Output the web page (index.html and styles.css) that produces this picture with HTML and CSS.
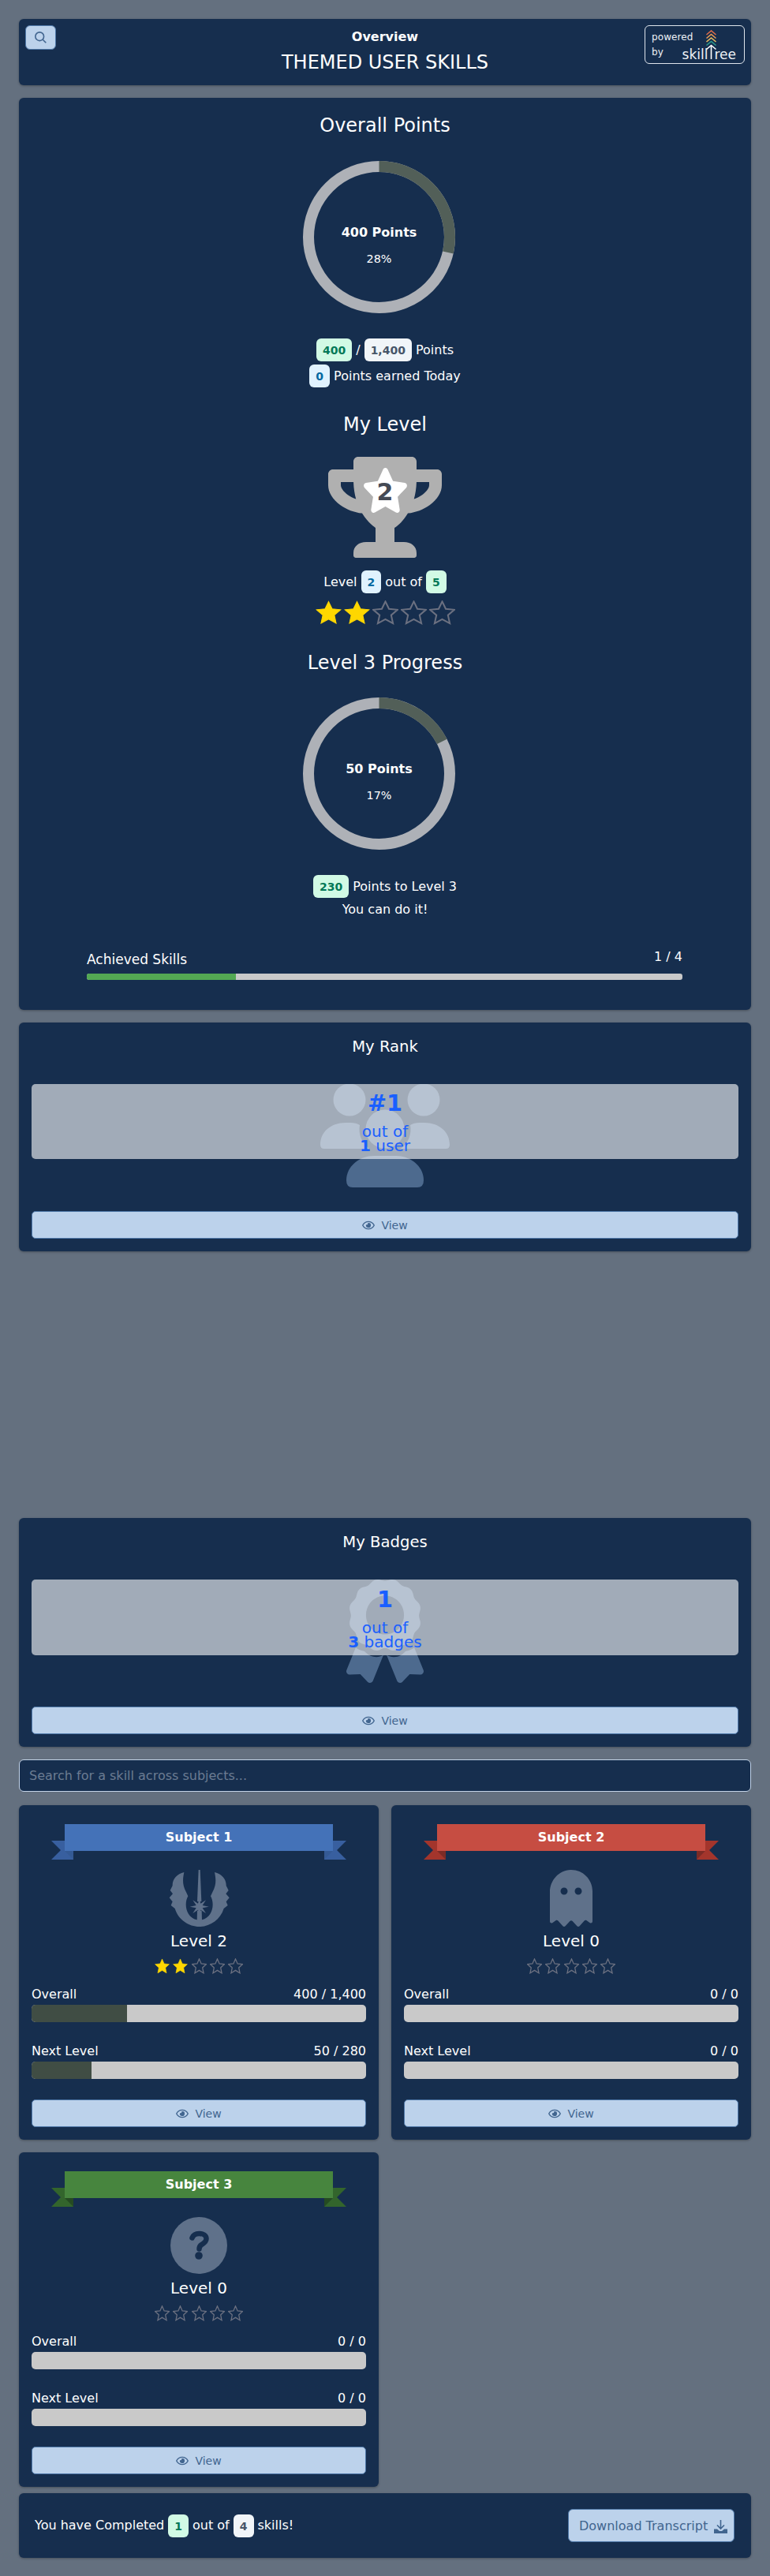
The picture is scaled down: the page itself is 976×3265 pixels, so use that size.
FILE: index.html
```html
<!DOCTYPE html>
<html lang="en">
<head>
<meta charset="utf-8">
<title>Themed User Skills</title>
<link rel="stylesheet" href="styles.css">
</head>
<body>
<svg class="sprite" aria-hidden="true">
  <symbol id="star" viewBox="0 0 32 32" preserveAspectRatio="none"><polygon points="16,1.5 20.4,11.1 31,12.2 23.1,19.3 25.3,30 16,24.6 6.7,30 8.9,19.3 1,12.2 11.6,11.1"/></symbol>
  <symbol id="eye" viewBox="0 0 576 512"><path d="M288 144a110.94 110.94 0 0 0-31.24 5 55.4 55.4 0 0 1 7.24 27 56 56 0 0 1-56 56 55.4 55.4 0 0 1-27-7.24A111.71 111.71 0 1 0 288 144zm284.52 97.4C518.29 135.59 410.93 64 288 64S57.68 135.64 3.48 241.41a32.35 32.35 0 0 0 0 29.19C57.71 376.41 165.07 448 288 448s230.32-71.64 284.52-177.41a32.35 32.35 0 0 0 0-29.19zM288 400c-98.65 0-189.09-55-237.93-144C98.91 167 189.34 112 288 112s189.09 55 237.93 144C477.1 345 386.66 400 288 400z"/></symbol>
</svg>
<main class="page">

  <header class="card top">
    <button class="search-btn" aria-label="Search">
      <svg viewBox="0 0 20 20" class="search-ico"><circle cx="8.5" cy="8.5" r="6.3"/><line x1="13.2" y1="13.2" x2="18" y2="18"/></svg>
    </button>
    <div class="top-titles">
      <div class="top-over">Overview</div>
      <h1 class="top-name">THEMED USER SKILLS</h1>
    </div>
    <div class="logo">
      <svg class="logo-tree" viewBox="0 0 14 37">
        <polyline class="c1" points="1,6 7,1 13,6"/>
        <polyline class="c2" points="1,10.5 7,5.5 13,10.5"/>
        <polyline class="c3" points="1,15 7,10 13,15"/>
        <polyline class="c4" points="1,19.5 7,14.5 13,19.5"/>
        <polyline class="c5" points="1,24.5 7,19.5 13,24.5"/>
        <line class="c5" x1="7" y1="20" x2="7" y2="37"/>
      </svg>
      <div class="logo-words">powered</div>
      <div class="logo-row"><span class="logo-words">by</span><span class="logo-name">skill<span class="logo-gap"></span>ree</span></div>
    </div>
  </header>

  <section class="card points">
    <h2 class="sec-title first">Overall Points</h2>
    <div class="chart">
      <div class="ring">
        <svg viewBox="0 0 193 193"><circle class="ring-track" cx="96.5" cy="96.5" r="89.5"/><circle class="ring-fill" cx="96.5" cy="96.5" r="89.5" pathLength="100" stroke-dasharray="28.5 71.5"/></svg>
        <div class="ring-text"><strong>400 Points</strong><span>28%</span></div>
      </div>
    </div>
    <div class="stat-row gap-a"><span class="pill green">400</span><span>/</span><span class="pill gray">1,400</span><span>Points</span></div>
    <div class="stat-row"><span class="pill blue">0</span><span>Points earned Today</span></div>

    <h2 class="sec-title level">My Level</h2>
    <div class="trophy">
      <svg viewBox="0 0 576 512"><path class="trophy-cup" d="M552 64H448V24c0-13.3-10.7-24-24-24H152c-13.3 0-24 10.7-24 24v40H24C10.7 64 0 74.7 0 88v56c0 35.7 22.5 72.4 61.9 100.7 31.5 22.7 69.8 37.1 110 41.7C203.3 338.5 240 360 240 360v72h-48c-35.3 0-64 20.7-64 56v12c0 6.6 5.4 12 12 12h296c6.6 0 12-5.4 12-12v-12c0-35.3-28.7-56-64-56h-48v-72s36.7-21.5 68.1-73.6c40.3-4.6 78.6-19 110-41.7 39.3-28.3 61.9-65 61.9-100.7V88c0-13.3-10.7-24-24-24zM99.3 192.8C74.9 175.2 64 155.6 64 144v-16h64.2c1 32.6 5.8 61.2 12.8 86.2-15.1-5.2-29.2-12.4-41.7-21.4zM512 144c0 16.1-17.7 36.1-35.3 48.8-12.5 9-26.7 16.2-41.8 21.4 7-25 11.8-53.6 12.8-86.2H512v16z"/></svg>
      <svg class="trophy-star" viewBox="0 0 576 512" preserveAspectRatio="none"><path d="M259.3 17.8L194 150.2 47.9 171.5c-26.2 3.8-36.7 36.1-17.7 54.6l105.7 103-25 145.5c-4.5 26.3 23.2 46 46.4 33.7L288 439.6l130.7 68.7c23.2 12.2 50.9-7.4 46.4-33.7l-25-145.5 105.7-103c19-18.5 8.5-50.8-17.7-54.6L382 150.2 316.7 17.8c-11.7-23.6-45.6-24.1-57.4 0z"/></svg>
      <span class="trophy-num">2</span>
    </div>
    <div class="stat-row gap-b"><span>Level</span><span class="pill blue">2</span><span>out of</span><span class="pill green">5</span></div>
    <div class="stars big">
      <svg class="star on"><use href="#star"/></svg><svg class="star on"><use href="#star"/></svg><svg class="star"><use href="#star"/></svg><svg class="star"><use href="#star"/></svg><svg class="star"><use href="#star"/></svg>
    </div>

    <h2 class="sec-title progress">Level 3 Progress</h2>
    <div class="chart">
      <div class="ring">
        <svg viewBox="0 0 193 193"><circle class="ring-track" cx="96.5" cy="96.5" r="89.5"/><circle class="ring-fill" cx="96.5" cy="96.5" r="89.5" pathLength="100" stroke-dasharray="17.5 82.5"/></svg>
        <div class="ring-text"><strong>50 Points</strong><span>17%</span></div>
      </div>
    </div>
    <div class="stat-row gap-a"><span class="pill green">230</span><span>Points to Level 3</span></div>
    <div class="cheer">You can do it!</div>

    <div class="achieved">
      <div class="achieved-head"><span class="ach-label">Achieved Skills</span><span class="ach-val">1 / 4</span></div>
      <div class="thin-bar"><div class="thin-fill" style="width:25%"></div></div>
    </div>
  </section>

  <section class="card vis rank">
    <h2 class="vis-title">My Rank</h2>
    <div class="vis-wrap">
      <svg class="vis-icon users" viewBox="0 0 164 132">
        <circle cx="37" cy="20" r="20.5"/><circle cx="131" cy="20" r="20.5"/><circle cx="82" cy="57" r="24.5"/>
        <path d="M0 77C0 60 14 49 32 49H38C43 49 47 50 50 52C48 63 52 74 62 82H5Q0 82 0 77Z"/>
        <path d="M164 77C164 60 150 49 132 49H126C121 49 117 50 114 52C116 63 112 74 102 82H159Q164 82 164 77Z"/>
        <path d="M33 122C33 104 50 91 68 91H96C114 91 131 104 131 122Q131 131 123 131H41Q33 131 33 122Z"/>
      </svg>
      <div class="vis-box">
        <div class="vis-big">#1</div>
        <div class="vis-sub">out of</div>
        <div class="vis-sub"><b>1</b> user</div>
      </div>
    </div>
    <button class="view-btn"><svg class="eye"><use href="#eye"/></svg><span>View</span></button>
  </section>

  <section class="card vis">
    <h2 class="vis-title">My Badges</h2>
    <div class="vis-wrap">
      <svg class="vis-icon award" viewBox="0 0 384 512" preserveAspectRatio="none"><path d="M97.12 362.63c-8.69-8.69-4.16-6.24-25.12-11.85-9.51-2.55-17.87-7.45-25.43-13.32L1.2 448.7c-4.39 10.77 3.81 22.47 15.43 22.03l52.69-2.01L105.56 507c8 8.44 22.04 5.81 26.43-4.96l52.05-127.62c-10.84 6.04-22.87 9.58-35.31 9.58-19.5 0-37.82-7.59-51.61-21.37zM382.8 448.7l-45.37-111.24c-7.56 5.88-15.92 10.77-25.43 13.32-21.07 5.64-16.45 3.18-25.12 11.85-13.79 13.78-32.12 21.37-51.62 21.37-12.44 0-24.47-3.55-35.31-9.58L252 502.04c4.39 10.77 18.44 13.4 26.43 4.96l36.25-38.28 52.69 2.01c11.62.44 19.82-11.27 15.43-22.03zM263 340c15.28-15.55 17.03-14.21 38.79-20.14 13.89-3.79 24.75-14.84 28.47-28.98 7.48-28.4 5.54-24.97 25.95-45.75 10.17-10.35 14.14-25.44 10.42-39.58-7.47-28.38-7.48-24.42 0-52.83 3.72-14.14-.25-29.23-10.42-39.58-20.41-20.78-18.47-17.36-25.95-45.75-3.72-14.14-14.58-25.19-28.47-28.98-27.88-7.61-24.52-5.62-44.95-26.41-10.17-10.35-25-14.4-38.89-10.61-27.87 7.6-23.98 7.61-51.9 0-13.89-3.79-28.72.25-38.89 10.61-20.41 20.78-17.05 18.8-44.94 26.41-13.89 3.79-24.75 14.84-28.47 28.98-7.47 28.39-5.54 24.97-25.95 45.75-10.17 10.35-14.15 25.44-10.42 39.58 7.47 28.36 7.48 24.4 0 52.82-3.72 14.14.25 29.23 10.42 39.59 20.41 20.78 18.47 17.35 25.95 45.75 3.72 14.14 14.58 25.19 28.47 28.98C104.6 325.96 106.27 325 121 340c13.23 13.47 33.84 15.88 49.74 5.82a39.676 39.676 0 0 1 42.53 0c15.89 10.06 36.5 7.65 49.73-5.82zM97.66 175.96c0-53.03 42.24-96.02 94.34-96.02s94.34 42.99 94.34 96.02-42.24 96.02-94.34 96.02-94.34-42.99-94.34-96.02z"/></svg>
      <div class="vis-box tall">
        <div class="vis-big">1</div>
        <div class="vis-sub">out of</div>
        <div class="vis-sub"><b>3</b> badges</div>
      </div>
    </div>
    <button class="view-btn"><svg class="eye"><use href="#eye"/></svg><span>View</span></button>
  </section>

  <input class="search-input" type="text" placeholder="Search for a skill across subjects...">

  <div class="subjects">
    <article class="card subject s1">
      <div class="banner">
        <svg class="tails" viewBox="0 0 374 24"><polygon class="tail" points="0,0 17,0 17,13 28,13 28,24 0,24 12,12"/><polygon class="fold" points="17,13 28,13 28,24"/><polygon class="tail" points="374,0 357,0 357,13 346,13 346,24 374,24 362,12"/><polygon class="fold" points="357,13 346,13 346,24"/></svg>
        <span>Subject 1</span>
      </div>
      <div class="subj-icon">
        <svg class="ico-jedi" viewBox="39 15 231 216">
          <path fill-rule="evenodd" d="M97 24C70 30 52 50 53 75L44 93L54 106L41 121L53 136L47 150L62 162C75 205 115 231 155 231C195 231 235 205 248 162L263 150L257 136L269 121L256 106L266 93L257 75C258 50 240 30 213 24C217 45 222 70 205 100L198 115C215 145 205 195 165 205H145C105 195 95 145 112 115L105 100C88 70 93 45 97 24Z"/>
          <polygon points="152,15 158,15 163,135 147,135"/>
          <polygon points="191,155 167,160 180,180 160,167 155,191 150,167 130,180 143,160 119,155 143,150 130,130 150,143 155,119 160,143 180,130 167,150"/>
          <polygon points="147,170 164,170 165,210 146,210"/>
        </svg>
      </div>
      <div class="subj-level">Level 2</div>
      <div class="stars small">
        <svg class="star on"><use href="#star"/></svg><svg class="star on"><use href="#star"/></svg><svg class="star"><use href="#star"/></svg><svg class="star"><use href="#star"/></svg><svg class="star"><use href="#star"/></svg>
      </div>
      <div class="meter"><div class="meter-head"><span>Overall</span><span>400 / 1,400</span></div><div class="bar"><div class="bar-fill" style="width:28.6%"></div></div></div>
      <div class="meter"><div class="meter-head"><span>Next Level</span><span>50 / 280</span></div><div class="bar"><div class="bar-fill" style="width:17.9%"></div></div></div>
      <button class="view-btn"><svg class="eye"><use href="#eye"/></svg><span>View</span></button>
    </article>

    <article class="card subject s2">
      <div class="banner">
        <svg class="tails" viewBox="0 0 374 24"><polygon class="tail" points="0,0 17,0 17,13 28,13 28,24 0,24 12,12"/><polygon class="fold" points="17,13 28,13 28,24"/><polygon class="tail" points="374,0 357,0 357,13 346,13 346,24 374,24 362,12"/><polygon class="fold" points="357,13 346,13 346,24"/></svg>
        <span>Subject 2</span>
      </div>
      <div class="subj-icon">
        <svg class="ico-ghost" viewBox="0 0 384 512"><path d="M186.1.09C81.01 3.24 0 94.92 0 200.05v263.92c0 14.26 17.23 21.39 27.31 11.31l24.92-18.53c6.66-4.95 16-3.99 21.51 2.21l42.95 48.35c6.25 6.25 16.38 6.25 22.63 0l40.72-45.85c6.37-7.17 17.56-7.17 23.92 0l40.72 45.85c6.25 6.25 16.38 6.25 22.63 0l42.95-48.35c5.51-6.2 14.85-7.16 21.51-2.21l24.92 18.53c10.08 10.08 27.31 2.95 27.31-11.31V192C384 84 294.83-3.17 186.1.09zM128 224c-17.67 0-32-14.33-32-32s14.33-32 32-32 32 14.33 32 32-14.33 32-32 32zm128 0c-17.67 0-32-14.33-32-32s14.33-32 32-32 32 14.33 32 32-14.33 32-32 32z"/></svg>
      </div>
      <div class="subj-level">Level 0</div>
      <div class="stars small">
        <svg class="star"><use href="#star"/></svg><svg class="star"><use href="#star"/></svg><svg class="star"><use href="#star"/></svg><svg class="star"><use href="#star"/></svg><svg class="star"><use href="#star"/></svg>
      </div>
      <div class="meter"><div class="meter-head"><span>Overall</span><span>0 / 0</span></div><div class="bar"></div></div>
      <div class="meter"><div class="meter-head"><span>Next Level</span><span>0 / 0</span></div><div class="bar"></div></div>
      <button class="view-btn"><svg class="eye"><use href="#eye"/></svg><span>View</span></button>
    </article>

    <article class="card subject s3">
      <div class="banner">
        <svg class="tails" viewBox="0 0 374 24"><polygon class="tail" points="0,0 17,0 17,13 28,13 28,24 0,24 12,12"/><polygon class="fold" points="17,13 28,13 28,24"/><polygon class="tail" points="374,0 357,0 357,13 346,13 346,24 374,24 362,12"/><polygon class="fold" points="357,13 346,13 346,24"/></svg>
        <span>Subject 3</span>
      </div>
      <div class="subj-icon">
        <svg class="ico-help" viewBox="0 0 72 72"><circle cx="36" cy="36" r="36"/><path class="help-mark" d="M27.5 26.5C29 22.5 32.5 21 36.5 21C41.5 21 45.5 23.5 45.5 27.5C45.5 31.5 42.5 33 39.5 35C37.5 36.3 36.5 37.5 36.5 40.5"/><circle class="help-dot" cx="36" cy="49" r="4.8"/></svg>
      </div>
      <div class="subj-level">Level 0</div>
      <div class="stars small">
        <svg class="star"><use href="#star"/></svg><svg class="star"><use href="#star"/></svg><svg class="star"><use href="#star"/></svg><svg class="star"><use href="#star"/></svg><svg class="star"><use href="#star"/></svg>
      </div>
      <div class="meter"><div class="meter-head"><span>Overall</span><span>0 / 0</span></div><div class="bar"></div></div>
      <div class="meter"><div class="meter-head"><span>Next Level</span><span>0 / 0</span></div><div class="bar"></div></div>
      <button class="view-btn"><svg class="eye"><use href="#eye"/></svg><span>View</span></button>
    </article>
  </div>

  <footer class="card foot">
    <div class="foot-text"><span>You have Completed</span><span class="pill green">1</span><span>out of</span><span class="pill gray">4</span><span>skills!</span></div>
    <button class="dl-btn"><span>Download Transcript</span>
      <svg class="dl-ico" viewBox="0 0 17 17"><path class="dl-arrow" d="M8.5 0V10M4 6.5L8.5 11L13 6.5"/><path class="dl-tray" d="M0 11.5H4L7 14H10L13 11.5H17V17H0Z"/></svg>
    </button>
  </footer>
</main>
</body>
</html>
```

FILE: styles.css
```css
* { box-sizing: border-box; }
html, body { margin: 0; padding: 0; }
body {
  background: #64707f;
  color: #fff;
  font-family: "DejaVu Sans", sans-serif;
  font-size: 16px;
  line-height: 1.5;
}
.sprite { position: absolute; width: 0; height: 0; }
.page {
  padding: 24px 24px 23px;
  display: flex;
  flex-direction: column;
  gap: 16px;
}
.card {
  background: #162e4e;
  border-radius: 6px;
  box-shadow: 0 1px 3px rgba(0, 0, 0, .3);
}
h1, h2 { margin: 0; font-weight: 400; }

/* header */
.top {
  height: 84px;
  padding: 8px;
  display: grid;
  grid-template-columns: 1fr auto 1fr;
  align-items: start;
}
.search-btn {
  width: 39px;
  height: 31px;
  padding: 0;
  display: flex;
  align-items: center;
  justify-content: center;
  background: #bcd2eb;
  border: 1px solid #4f78a8;
  border-radius: 6px;
}
.search-ico { width: 17px; height: 17px; fill: none; stroke: #41658f; stroke-width: 1.9; }
.top-titles { text-align: center; }
.top-over { font-size: 16px; font-weight: 700; line-height: 24px; margin-top: 3px; }
.top-name { font-size: 24px; line-height: 36px; margin-top: 2px; white-space: nowrap; }
.logo {
  position: relative;
  justify-self: end;
  width: 127px;
  height: 49px;
  border: 1px solid #dfe5ec;
  border-radius: 6px;
  padding: 5px 8px 0;
  color: #eef2f6;
}
.logo-words { font-size: 12px; line-height: 18px; letter-spacing: .1px; }
.logo-row { display: flex; justify-content: space-between; align-items: flex-start; line-height: 18px; margin-top: 1px; }
.logo-name { font-size: 17px; line-height: 20px; margin: 2px 2px 0 0; }
.logo-gap { display: inline-block; width: 8px; }
.logo-tree { position: absolute; left: 76px; top: 5px; width: 15px; height: 37px; fill: none; stroke-width: 1.6; }
.c1 { stroke: #dc6d4b; }
.c2 { stroke: #ee9b52; }
.c3 { stroke: #e9bf63; }
.c4 { stroke: #2a9d8f; }
.c5 { stroke: #fff; }

/* points card */
.points { height: 1156px; padding-top: 17px; text-align: center; }
.sec-title { font-size: 24px; line-height: 36px; }
.sec-title.level { margin-top: 27px; }
.sec-title.progress { margin-top: 30px; }
.chart { display: flex; justify-content: center; padding-right: 15px; margin-top: 27px; }
.sec-title.progress + .chart { margin-top: 26px; }
.ring { position: relative; width: 193px; height: 193px; }
.ring svg { display: block; width: 193px; height: 193px; }
.ring circle { fill: none; stroke-width: 14; }
.ring-track { stroke: #aeb1b7; }
.ring-fill { stroke: #525f58; transform: rotate(-90deg); transform-origin: 96.5px 96.5px; }
.ring-text {
  position: absolute;
  inset: 0;
  display: flex;
  flex-direction: column;
  align-items: center;
  padding-top: 79px;
}
.ring-text strong { font-size: 16px; line-height: 24px; }
.ring-text span { font-size: 14.4px; line-height: 22px; margin-top: 10px; }
.stat-row {
  display: flex;
  justify-content: center;
  align-items: center;
  gap: 5px;
  height: 33px;
  line-height: 29px;
}
.gap-a { margin-top: 30px; }
.gap-b { margin-top: 14px; }
.pill {
  display: inline-block;
  height: 29px;
  padding: 0 8px;
  border-radius: 6px;
  font-size: 14px;
  font-weight: 700;
  line-height: 30px;
}
.green { background: #d1fae5; color: #047857; }
.gray { background: #f1f5f9; color: #475569; }
.blue { background: #e0f2fe; color: #0369a1; }

.trophy { position: relative; width: 144px; height: 128px; margin: 23px auto 0; }
.trophy svg { position: absolute; left: 0; top: 0; width: 144px; height: 128px; }
.trophy-cup { fill: #b0b0b0; }
.trophy .trophy-star { left: 43px; top: 14px; width: 59px; height: 57px; fill: #fff; }
.trophy-num {
  position: absolute;
  left: 0;
  right: 0;
  top: 24px;
  font-size: 30px;
  font-weight: 700;
  line-height: 42px;
  color: #454a54;
}
.stars { display: flex; justify-content: center; }
.star { display: block; fill: none; stroke: #6b7080; stroke-width: 2; }
.star.on { fill: #ffd700; stroke: #ffd700; stroke-width: 1; }
.stars.big { gap: 3px; margin-top: 7px; }
.stars.big .star { width: 33px; height: 31px; }
.stars.small { gap: 4.2px; margin-top: 7px; }
.stars.small .star { width: 19px; height: 20px; stroke-width: 2.2; }
.stars.small .star.on { stroke-width: 1; }
.cheer { line-height: 24px; margin-top: 1px; }
.achieved { margin: 37px 87px 0 86px; }
.achieved-head { display: flex; justify-content: space-between; align-items: flex-start; height: 32px; }
.ach-label { font-size: 17px; line-height: 24px; margin-top: 2px; }
.ach-val { line-height: 24px; margin-top: -1px; }
.thin-bar { height: 8px; border-radius: 3px; background: #c9c9c9; overflow: hidden; }
.thin-fill { height: 100%; background: #53a853; }

/* rank and badges */
.vis { height: 290px; padding: 0 16px; text-align: center; }
.rank { margin-bottom: 322px; }
.vis-title { font-size: 19.6px; line-height: 29px; padding-top: 16px; height: 78px; }
.vis-wrap { position: relative; height: 161px; }
.vis-icon { position: absolute; left: 50%; top: 0; fill: #4d6a8e; }
.users { width: 164px; height: 132px; margin-left: -82px; }
.award { width: 98px; height: 131px; margin-left: -49px; }
.vis-box {
  position: relative;
  height: 95px;
  padding-top: 3px;
  background: rgba(255, 255, 255, .6);
  border-radius: 5px;
  color: #1a5fff;
}
.vis-box.tall { height: 96px; padding-top: 4px; }
.vis-big { font-size: 28.8px; font-weight: 700; line-height: 43px; margin-bottom: 5px; }
.vis-sub { font-size: 20px; line-height: 18px; }
.view-btn {
  display: flex;
  align-items: center;
  justify-content: center;
  gap: 8px;
  width: 100%;
  height: 35px;
  padding: 0;
  background: #bcd2eb;
  border: 1px solid #4f78a8;
  border-radius: 5px;
  color: #41658f;
  font-family: "DejaVu Sans", sans-serif;
  font-size: 14px;
}
.eye { width: 16px; height: 14px; fill: #41658f; }

.search-input {
  display: block;
  width: 100%;
  height: 41px;
  padding: 0 12px;
  background: #162e4e;
  border: 1px solid #c4d4e8;
  border-radius: 6px;
  color: #fff;
  font-family: "DejaVu Sans", sans-serif;
  font-size: 16px;
}
.search-input::placeholder { color: #6b7c92; opacity: 1; }

/* subjects */
.subjects { display: grid; grid-template-columns: 456px 456px; gap: 16px; margin-top: 1px; }
.subject { height: 424px; padding: 24px 16px 0; text-align: center; }
.banner {
  position: relative;
  width: 340px;
  height: 34px;
  margin: 0 auto;
  font-weight: 700;
  line-height: 33px;
}
.tails { position: absolute; left: -17px; top: 21px; width: 374px; height: 24px; }
.s1 .banner { background: #4472b8; }
.s1 .tail { fill: #385f9f; }
.s1 .fold { fill: #345a95; }
.s2 .banner { background: #c64d42; }
.s2 .tail { fill: #a3352c; }
.s2 .fold { fill: #7c2b26; }
.s3 .banner { background: #47853e; }
.s3 .tail { fill: #33652c; }
.s3 .fold { fill: #254a22; }
.subj-icon { height: 72px; margin-top: 24px; display: flex; justify-content: center; fill: #5f718a; }
.subj-icon svg { height: 72px; display: block; }
.ico-jedi { width: 77px; }
.ico-ghost { width: 54px; }
.ico-help { width: 72px; }
.help-mark { fill: none; stroke: #162e4e; stroke-width: 6.5; stroke-linecap: round; }
.help-dot { fill: #162e4e; }
.subj-level { font-size: 20px; line-height: 30px; margin-top: 3px; }
.meter { margin-top: 14px; }
.meter + .meter { margin-top: 25px; }
.meter-head { display: flex; justify-content: space-between; font-size: 16px; line-height: 24px; height: 25px; }
.bar { height: 22px; border-radius: 5px; background: #c9c9c9; overflow: hidden; }
.bar-fill { height: 100%; background: #404d44; }
.subject .view-btn { margin-top: 26px; }

/* footer */
.foot {
  height: 82px;
  margin-top: -8px;
  display: flex;
  align-items: center;
  justify-content: space-between;
  padding: 0 21px 0 20px;
}
.foot-text { display: flex; align-items: center; gap: 5px; }
.dl-btn {
  display: flex;
  align-items: center;
  gap: 8px;
  width: 211px;
  height: 42px;
  padding: 0 0 0 13px;
  background: #bcd2eb;
  border: 1px solid #4f78a8;
  border-radius: 6px;
  color: #41658f;
  font-family: "DejaVu Sans", sans-serif;
  font-size: 16px;
}
.dl-ico { width: 17px; height: 17px; margin-top: 2px; flex: none; }
.dl-arrow { fill: none; stroke: #41658f; stroke-width: 1.6; }
.dl-tray { fill: #41658f; }
```
